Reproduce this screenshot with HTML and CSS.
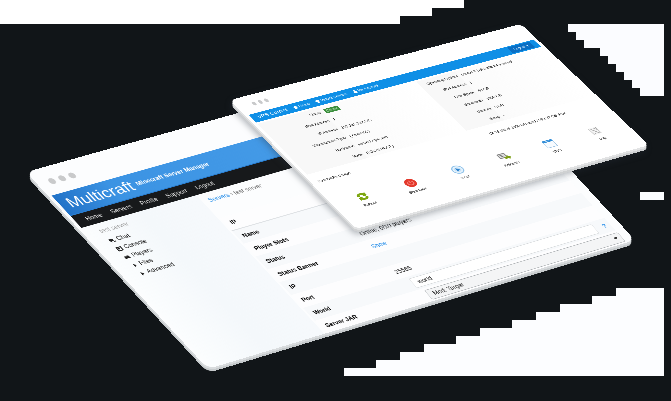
FILE: index.html
```html
<!DOCTYPE html>
<html lang="en">
<head>
<meta charset="utf-8">
<meta name="viewport" content="width=device-width, initial-scale=1">
<title>Control panels</title>
<link rel="stylesheet" href="styles.css">
</head>
<body>
<main class="scene">
  <svg class="backdrop" viewBox="0 0 671 401" aria-hidden="true">
    <path fill="#fff" d="M0 0H464V8H432V16H400V24H0Z"/>
    <path fill="#fbfcff" d="M568 24H664V96H640V88H632V80H624V72H616V64H608V56H600V48H584V40H576V32H568Z"/>
    <path fill="#fbfdff" d="M640 192H664V200H640Z"/>
    <path fill="#fcfdff" d="M616 288H664V376H344V368H376V360H400V352H424V344H456V336H480V328H512V320H536V312H560V304H592V296H616Z"/>
  </svg>

  <div class="slab">
    <section class="window game">
      <div class="dots"><i></i><i></i><i></i></div>
      <header class="game-brand"><strong>Multicraft</strong><span>Minecraft Server Manager</span></header>
      <nav class="game-nav"><a href="#">Home</a><a href="#">Servers</a><a href="#">Profile</a><a href="#">Support</a><a href="#">Logout</a></nav>
      <div class="game-body">
        <aside class="side">
          <h2>test server</h2>
          <a href="#"><svg viewBox="0 0 12 12"><path d="M1 2h8v5H5L3 10V7H1zM8 8h4v2H8z"/></svg>Chat</a>
          <a href="#"><svg viewBox="0 0 12 12"><path d="M1 1h10v10H1zm2 2v6h6V3zm1 1h3v3H4z"/></svg>Console</a>
          <a href="#"><svg viewBox="0 0 12 12"><path d="M1 5a2 2 0 0 1 4 0 2 2 0 0 1 5 0l1 4H1z"/></svg>Players</a>
          <a href="#"><svg viewBox="0 0 12 12"><path d="M4 2l5 4-5 4z"/></svg>Files</a>
          <a href="#"><svg viewBox="0 0 12 12"><path d="M4 2l5 4-5 4z"/></svg>Advanced</a>
        </aside>
        <div class="main">
          <p class="crumbs"><a href="#">Servers</a> › test server</p>
          <table class="settings">
            <tr><th>IP</th><td></td></tr>
            <tr><th>Name</th><td></td></tr>
            <tr><th>Player Slots</th><td></td></tr>
            <tr><th>Status</th><td>Online, 0/10 players</td></tr>
            <tr><th>Status Banner</th><td><a href="#">Show</a></td></tr>
            <tr><th>IP</th><td></td></tr>
            <tr><th>Port</th><td>25565</td></tr>
            <tr><th><label for="world">World</label></th><td><div class="field"><input id="world" value="world"><b class="help">?</b></div></td></tr>
            <tr><th><label for="jar">Server JAR</label></th><td><div class="field pick"><select id="jar"><option>Mod: Target</option></select></div></td></tr>
          </table>
        </div>
      </div>
    </section>
  </div>

  <div class="slab front">
    <section class="window vps">
      <div class="dots"><i></i><i></i><i></i></div>
      <nav class="vps-nav">
        <strong>VPS Control</strong>
        <a href="#"><svg viewBox="0 0 12 12"><path d="M6 0l6 6h-2v6H2V6H0z"/></svg>Home</a>
        <a href="#"><svg viewBox="0 0 12 12"><path d="M1 1h10v7H7v2h2v2H3v-2h2V8H1z"/></svg>Virtual Servers</a>
        <a href="#"><svg viewBox="0 0 12 12"><path d="M6 0a3 3 0 0 1 2 5l3 2v5H1V7l3-2a3 3 0 0 1 2-5z"/></svg>My Account</a>
        <button type="button">Logout ▾</button>
      </nav>
      <div class="facts">
        <table>
          <tr><th>Status</th><td><span class="badge">Online</span></td></tr>
          <tr><th>IPv4 Address</th><td>1</td></tr>
          <tr><th>IP Address</th><td>192.241.202.145</td></tr>
          <tr><th>Virtualization Type</th><td>( OpenVZ )</td></tr>
          <tr><th>Hostname</th><td>server1.vps.com</td></tr>
          <tr><th>Node</th><td>(LOCALHOST)</td></tr>
        </table>
        <table>
          <tr><th>Operating System</th><td>centos 6 (x86) x86 64 minimal</td></tr>
          <tr><th>IPv4 Address</th><td>1</td></tr>
          <tr><th>Disk Space</th><td>40 GB</td></tr>
          <tr><th>Bandwidth</th><td>1000 GB</td></tr>
          <tr><th>Memory</th><td>2 GB</td></tr>
          <tr><th>Swap</th><td>-</td></tr>
        </table>
      </div>
      <div class="usage"><span>Bandwidth Usage</span><span>Of 15 MB of 1000 GB used / 999.97 GB Free</span></div>
      <div class="actions">
        <button type="button"><svg viewBox="0 0 36 36"><g fill="#7da711"><path d="M4 16C5 5 18 1 27 8l4-4v14H18l4-5c-5-4-10-2-11 3z"/><path d="M32 20C31 31 18 35 9 28l-4 4V19h13l-4 4c5 4 10 2 11-3z"/></g></svg>Reboot</button>
        <button type="button"><svg viewBox="0 0 36 36"><circle cx="18" cy="18" r="16" fill="#e3392c"/><path d="M12 13a8 8 0 1 0 12 0M18 8v9" fill="none" stroke="#f58076" stroke-width="3"/></svg>Shutdown</button>
        <button type="button"><svg viewBox="0 0 36 36"><circle cx="18" cy="18" r="15" fill="#e4f2fc" stroke="#91c3ea" stroke-width="3"/><circle cx="18" cy="18" r="9" fill="#c5e0f5"/><path d="M14 11l11 7-11 7z" fill="#2c83cf"/></svg>Boot</button>
        <button type="button"><svg viewBox="0 0 36 36"><path d="M5 6h20v16H5z" fill="#ddd" stroke="#888" stroke-width="3"/><path d="M10 11h10M10 16h10" stroke="#777" stroke-width="2"/><path d="M17 20h10v-5l8 9-8 9v-5H17z" fill="#7d9f16"/></svg>Reinstall</button>
        <button type="button"><svg viewBox="0 0 36 36"><path d="M4 4h28v28H4z" fill="#f7fbff" stroke="#9fc4e3" stroke-width="2"/><path d="M3 3h30v8H3z" fill="#338ed8"/><path d="M8 7h16" stroke="#b9ddf8" stroke-width="2"/></svg>VNC</button>
        <button type="button"><svg viewBox="0 0 36 36"><path d="M5 4h26v28H5z" fill="#f5f5f5"/><path d="M7 6v25M29 6v25M11 9h15M11 15h15M11 21h15M11 27h15" stroke="#aaa" stroke-width="2"/></svg>Log</button>
      </div>
    </section>
  </div>
</main>
</body>
</html>
```

FILE: styles.css
```css
* { box-sizing: border-box; }
body {
  margin: 0;
  min-height: 100vh;
  background: #111518;
  font-family: "Liberation Sans", Arial, sans-serif;
}
a { color: inherit; text-decoration: none; }
button, input, select { font: inherit; color: inherit; margin: 0; }

/* Free canvas holding the two tilted windows */
.scene { position: relative; max-width: 671px; margin: 0 auto; overflow: hidden; }
.backdrop { display: block; width: 100%; }
.slab {
  position: absolute;
  inset: 0;
  filter: drop-shadow(0 2px 0 #d9dcde) drop-shadow(0 2px 0 #c6cacc);
}
.slab.front {
  filter: drop-shadow(0 2px 0 #e2e3e4) drop-shadow(0 2px 0 #cfd1d2) drop-shadow(-1px 2px 3px rgba(40, 50, 60, .35));
}
.window {
  width: 900px;
  display: flex;
  flex-direction: column;
  overflow: hidden;
  border-radius: 16px;
  background: #fff;
  transform-origin: 0 0;
}
.dots { display: flex; align-items: center; }
.dots i { border-radius: 50%; background: #c9cacb; }

/* Game server window */
.game {
  height: 500px;
  padding: 0 6px;
  background: #fcfdfe;
  transform: matrix3d(.50544, -.132, 0, .00004791, .3644, .3948, 0, .0000023, 0, 0, 1, 0, 26, 172, 0, 1);
}
.game .dots { flex: 0 0 62px; gap: 8px; padding: 4px 16px 0; }
.game .dots i { width: 12px; height: 14px; }
.game-brand {
  flex: 0 0 52px;
  display: flex;
  align-items: center;
  gap: 8px;
  padding-left: 14px;
  color: #fff;
  background: linear-gradient(90deg, #2273c8, #3b93e3 12%, #469ce8 60%, #3b8fe0);
  border-bottom: 2px solid #2b7fd2;
}
.game-brand strong { font-size: 32px; font-weight: 400; }
.game-brand span { font-size: 12px; font-weight: 700; }
.game-nav {
  flex: 0 0 30px;
  display: flex;
  align-items: center;
  gap: 18px;
  padding-left: 20px;
  background: #17191b;
  color: #e4e4e4;
  font-size: 12px;
}
.game-body { flex: 1; display: flex; }
.side {
  flex: 0 0 232px;
  padding: 8px 24px;
  font-size: 12px;
  color: #222;
  background: linear-gradient(90deg, #fbfdfe, #f4f8fb 50%, #f6f9fc);
}
.side h2 { margin: 0 0 4px; font-size: 12px; line-height: 20px; font-weight: 400; color: #999; }
.side a { display: flex; align-items: center; gap: 4px; line-height: 21px; }
.side svg { width: 12px; height: 12px; fill: #222; }
.main { flex: 1; padding: 8px 12px 0 4px; }
.crumbs { margin: 0 0 32px 8px; font-size: 12px; line-height: 20px; color: #777; }
.crumbs a, .settings a { color: #1686e8; }
.settings { width: 100%; border-collapse: collapse; font-size: 12px; color: #222; }
.settings tr { height: 33px; background: #fdfdfe; }
.settings tr:nth-child(even) { background: #f7f9fb; }
.settings tr:first-child { border-bottom: 2px solid #dfe2e5; }
.settings th { width: 204px; padding: 0 10px; text-align: left; color: #000; }
.settings td { padding: 0; }
.field { display: flex; align-items: center; gap: 8px; padding-left: 12px; }
.field.pick { padding-left: 20px; }
.field input, .field select {
  flex: 1;
  height: 24px;
  padding: 0 10px;
  border: 1px solid #d5d8da;
  border-radius: 3px;
  background: #fff;
  appearance: none;
}
.field select {
  border-color: #a9adb0;
  background:
    conic-gradient(from -45deg at 50% 100%, #333 90deg, transparent 0) right 8px center / 8px 5px no-repeat,
    #f4f5f6;
}
.field b { width: 24px; text-align: center; }
.help { color: #1686e8; }

/* VPS window */
.vps {
  height: 560px;
  padding: 0 10px;
  transform: matrix3d(.35056, -.0832, 0, .00005233, .2075, .2191, 0, -.00004893, 0, 0, 1, 0, 230, 100, 0, 1);
}
.vps .dots { flex: 0 0 70px; gap: 8px; padding: 0 34px; }
.vps .dots i { width: 10px; height: 16px; }
.vps-nav {
  flex: 0 0 34px;
  display: flex;
  align-items: center;
  gap: 18px;
  padding: 0 16px;
  background: #0f8fe6;
  color: #fff;
  font-size: 12px;
}
.vps-nav strong { font-size: 16px; font-weight: 400; }
.vps-nav a { display: flex; align-items: center; gap: 4px; }
.vps-nav svg { width: 12px; height: 14px; fill: #fff; }
.vps-nav button { margin-left: auto; width: 72px; height: 26px; border: 0; background: #0a6fc4; color: #d7ecff; }
.facts { display: grid; grid-template-columns: 480px 1fr; padding-top: 6px; }
.facts table { border-collapse: collapse; font-size: 12px; color: #222; }
.facts tr { height: 37px; }
.facts th { width: 180px; padding: 0 4px; text-align: right; font-weight: 400; background: #f8f8f8; white-space: nowrap; }
.facts table + table th { width: 120px; }
.facts td { padding: 0 8px; background: linear-gradient(90deg, #fbfbfb, #fff); white-space: nowrap; }
.badge { display: inline-block; padding: 2px 4px; background: #3b8e3d; color: #d4f5d4; border-radius: 2px; }
.usage {
  display: flex;
  justify-content: space-between;
  margin-top: 24px;
  padding: 0 112px 0 10px;
  font-size: 12px;
  line-height: 20px;
  color: #222;
}
.actions { display: grid; grid-template-columns: repeat(6, 1fr); margin-top: 64px; padding: 0 16px 0 8px; }
.actions button {
  display: flex;
  flex-direction: column;
  align-items: center;
  gap: 8px;
  padding: 0;
  border: 0;
  background: none;
  font-size: 12px;
  color: #222;
}
.actions svg { width: 36px; height: 36px; }
```
